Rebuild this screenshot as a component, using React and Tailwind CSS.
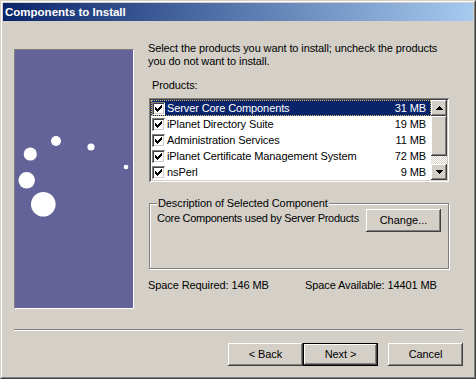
import React from "react";

const font = { fontFamily: '"Liberation Sans", Arial, sans-serif' };

const raised =
  "shadow-[inset_-1px_-1px_#404040,inset_1px_1px_#ffffff,inset_-2px_-2px_#808080,inset_2px_2px_#d4d0c8]";
const sunken =
  "shadow-[inset_1px_1px_#808080,inset_-1px_-1px_#ffffff,inset_2px_2px_#404040,inset_-2px_-2px_#d4d0c8]";

function Check() {
  return (
    <div className={`w-[13px] h-[13px] shrink-0 bg-white p-[2px] ${sunken}`}>
      <svg width="9" height="9" viewBox="0 0 9 9" shapeRendering="crispEdges">
        <path d="M1 3 H2 V4 H3 V5 H4 V4 H5 V3 H6 V2 H7 V1 H8 V4 H7 V5 H6 V6 H5 V7 H4 V8 H3 V7 H2 V6 H1 Z" fill="#000" />
      </svg>
    </div>
  );
}

function Button({ children, def, className = "" }) {
  return (
    <div
      className={`w-[75px] h-[23px] flex items-center justify-center text-[11px] text-black bg-[#d4d0c8] ${
        def
          ? "border border-black shadow-[inset_-1px_-1px_#404040,inset_1px_1px_#ffffff,inset_-2px_-2px_#808080]"
          : raised
      } ${className}`}
    >
      {children}
    </div>
  );
}

const rows = [
  ["Server Core Components", "31 MB"],
  ["iPlanet Directory Suite", "19 MB"],
  ["Administration Services", "11 MB"],
  ["iPlanet Certificate Management System", "72 MB"],
  ["nsPerl", "9 MB"],
];

function Arrow({ up }) {
  return (
    <svg width="7" height="4" viewBox="0 0 7 4" shapeRendering="crispEdges">
      {up ? (
        <path d="M3 0 H4 V1 H5 V2 H6 V3 H7 V4 H0 V3 H1 V2 H2 V1 H3 Z" fill="#000" />
      ) : (
        <path d="M0 0 H7 V1 H6 V2 H5 V3 H4 V4 H3 V3 H2 V2 H1 V1 H0 Z" fill="#000" />
      )}
    </svg>
  );
}

export default function App() {
  return (
    <div
      style={font}
      className="w-[476px] h-[379px] bg-[#d4d0c8] border border-t-[#d4d0c8] border-l-[#d4d0c8] border-b-[#404040] border-r-[#404040] text-[11px] leading-[13px] tracking-[-0.1px] text-black overflow-hidden"
    >
      <div className="w-full h-full border border-t-white border-l-white border-b-[#808080] border-r-[#808080] p-[1px] flex flex-col">
        <div className="h-[18px] shrink-0 flex items-center pl-[2px] bg-[linear-gradient(to_right,#0a246a,#a6caf0)] text-white font-bold text-[11.5px] tracking-normal">
          Components to Install
        </div>

        <div className="h-[308px] shrink-0 flex pl-[11px] pt-[21px]">
          <div className="mt-[7px] w-[120px] h-[260px] shrink-0 bg-[#636399] border border-t-[#808080] border-l-[#808080] border-b-white border-r-white">
            <svg width="118" height="258" viewBox="1 1 118 258">
              <circle cx="42" cy="92" r="5" fill="#fff" />
              <circle cx="16.3" cy="105" r="6.6" fill="#fff" />
              <circle cx="77" cy="98" r="3.6" fill="#fff" />
              <circle cx="112" cy="118" r="2.3" fill="#fff" />
              <circle cx="12.7" cy="131.3" r="8.3" fill="#fff" />
              <circle cx="29.3" cy="155.3" r="12.3" fill="#fff" />
            </svg>
          </div>

          <div className="ml-[14px] w-[301px] flex flex-col">
            <p className="whitespace-nowrap">
              Select the products you want to install; uncheck the products
              <br />
              you do not want to install.
            </p>
            <div className="mt-[11px] pl-[4px]">Products:</div>

            <div className={`mt-[6px] ml-[1px] w-[300px] h-[84px] bg-white p-[2px] flex ${sunken}`}>
              <div className="w-[280px] flex flex-col">
                {rows.map(([name, size], i) => (
                  <div
                    key={name}
                    className={`h-[16px] flex items-center pl-[1px] pr-[5px] ${
                      i === 0
                        ? "bg-[#0a246a] text-white outline-1 outline-dotted outline-[#e0c070] -outline-offset-1"
                        : ""
                    }`}
                  >
                    <Check />
                    <span className="ml-[2px] flex-1 whitespace-nowrap">{name}</span>
                    <span>{size}</span>
                  </div>
                ))}
              </div>
              <div className="w-[16px] flex flex-col">
                <div className={`h-[16px] bg-[#d4d0c8] flex items-center justify-center ${raised}`}>
                  <Arrow up />
                </div>
                <div className={`h-[40px] bg-[#d4d0c8] ${raised}`} />
                <div className="flex-1 bg-[image:repeating-conic-gradient(#d4d0c8_0_25%,#ffffff_0_50%)] bg-[length:2px_2px]" />
                <div className={`h-[16px] bg-[#d4d0c8] flex items-center justify-center ${raised}`}>
                  <Arrow />
                </div>
              </div>
            </div>

            <fieldset className="mt-[15px] ml-[1px] w-[300px] h-[72px] border border-[#808080] shadow-[inset_1px_1px_#ffffff,1px_1px_#ffffff] pl-[7px] pr-[7px]">
              <legend className="px-[1px] leading-[12px] bg-[#d4d0c8]">
                Description of Selected Component
              </legend>
              <div className="flex items-start justify-between">
                <span className="mt-[3px] whitespace-nowrap tracking-[-0.28px]">Core Components used by Server Products</span>
                <Button className="w-[74px] shrink-0 tracking-normal">Change...</Button>
              </div>
            </fieldset>

            <div className="mt-[10px] flex whitespace-nowrap">
              <span className="w-[157px]">Space Required: 146 MB</span>
              <span>Space Available: 14401 MB</span>
            </div>
          </div>
        </div>

        <div className="ml-[11px] mr-[10px] h-[2px] border-t border-t-[#808080] border-b border-b-white" />

        <div className="mt-[12px] flex justify-end pr-[10px]">
          <Button>&lt; Back</Button>
          <Button def>Next &gt;</Button>
          <Button className="ml-[10px]">Cancel</Button>
        </div>
      </div>
    </div>
  );
}
